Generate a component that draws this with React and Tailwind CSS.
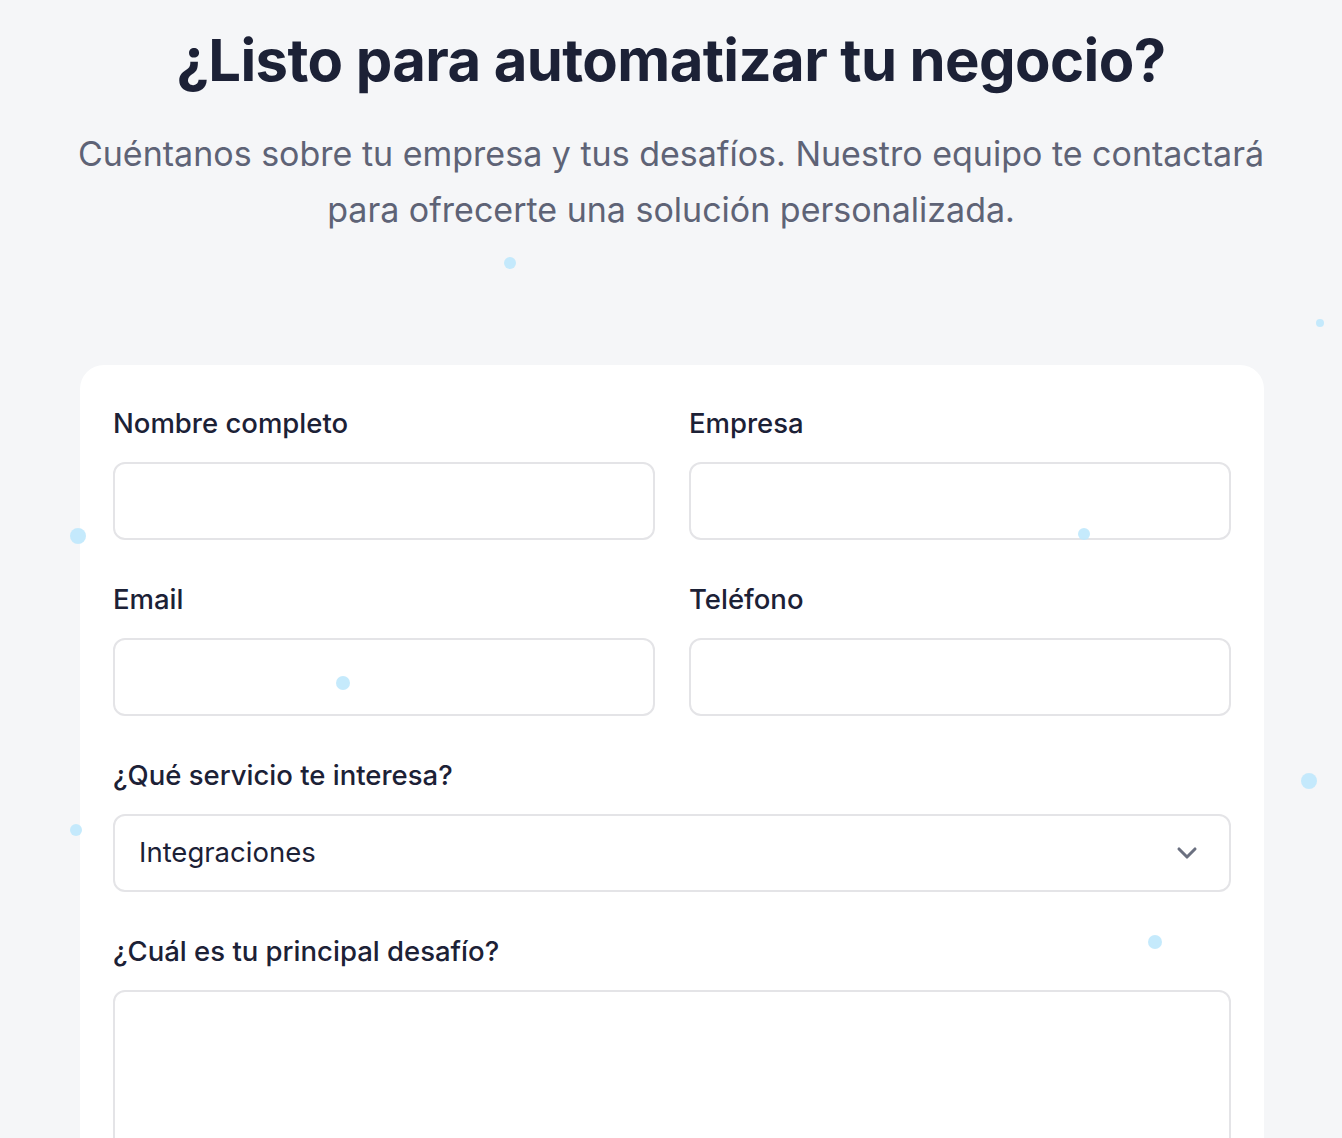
import { ChevronDown } from 'lucide-react'

const DOTS = [
  { x: 510, y: 263, s: 12 },
  { x: 1320, y: 323, s: 8 },
  { x: 78, y: 536, s: 16 },
  { x: 1084, y: 534, s: 12 },
  { x: 343, y: 683, s: 14 },
  { x: 1309, y: 781, s: 16 },
  { x: 76, y: 830, s: 12 },
  { x: 1155, y: 942, s: 14 },
]

function Field({ label }) {
  return (
    <div className="flex flex-col">
      <label className="text-[27.5px] leading-[36px] font-medium text-[#1c2136]">{label}</label>
      <input className="mt-[21px] h-[78px] w-full rounded-xl border-2 border-[#e4e4e7] bg-white outline-none" />
    </div>
  )
}

export default function App() {
  return (
    <div
      className="relative min-h-[1138px] overflow-hidden bg-[#f5f6f8]"
      style={{ fontFamily: 'Inter, "Noto Sans", sans-serif' }}
    >
      {/* Header */}
      <div className="pt-[30px] text-center">
        <h1 className="text-[58px] leading-[60px] font-bold tracking-[-0.6px] text-[#1c2136]">
          ¿Listo para automatizar tu negocio?
        </h1>
        <p className="mx-auto mt-[36px] max-w-[1250px] text-[34px] leading-[56px] text-[#5e6376]">
          Cuéntanos sobre tu empresa y tus desafíos. Nuestro equipo te contactará
          <br />
          para ofrecerte una solución personalizada.
        </p>
      </div>

      {/* Form card */}
      <div className="mx-auto mt-[127px] w-[1184px] translate-x-[1px] rounded-3xl bg-white px-[33px] pt-10 pb-10">
        <div className="grid grid-cols-2 gap-x-[34px] gap-y-[41px]">
          <Field label="Nombre completo" />
          <Field label="Empresa" />
          <Field label="Email" />
          <Field label="Teléfono" />
          <div className="col-span-2 flex flex-col">
            <label className="text-[27.5px] leading-[36px] font-medium text-[#1c2136]">¿Qué servicio te interesa?</label>
            <div className="mt-[21px] flex h-[78px] items-center justify-between rounded-xl border-2 border-[#e4e4e7] bg-white pl-6 pr-[26px]">
              <span className="text-[27.5px] text-[#1c2136]">Integraciones</span>
              <ChevronDown size={32} strokeWidth={2.3} className="text-[#6b7080]" />
            </div>
          </div>
          <div className="col-span-2 flex flex-col">
            <label className="text-[27.5px] leading-[36px] font-medium text-[#1c2136]">¿Cuál es tu principal desafío?</label>
            <textarea className="mt-[21px] h-[200px] w-full resize-none rounded-xl border-2 border-[#e4e4e7] bg-white outline-none" />
          </div>
        </div>
      </div>

      {/* Floating particles */}
      {DOTS.map((d, i) => (
        <div
          key={i}
          className="pointer-events-none absolute rounded-full bg-[#bfe8fc]/90"
          style={{ left: d.x - d.s / 2, top: d.y - d.s / 2, width: d.s, height: d.s }}
        />
      ))}
    </div>
  )
}
